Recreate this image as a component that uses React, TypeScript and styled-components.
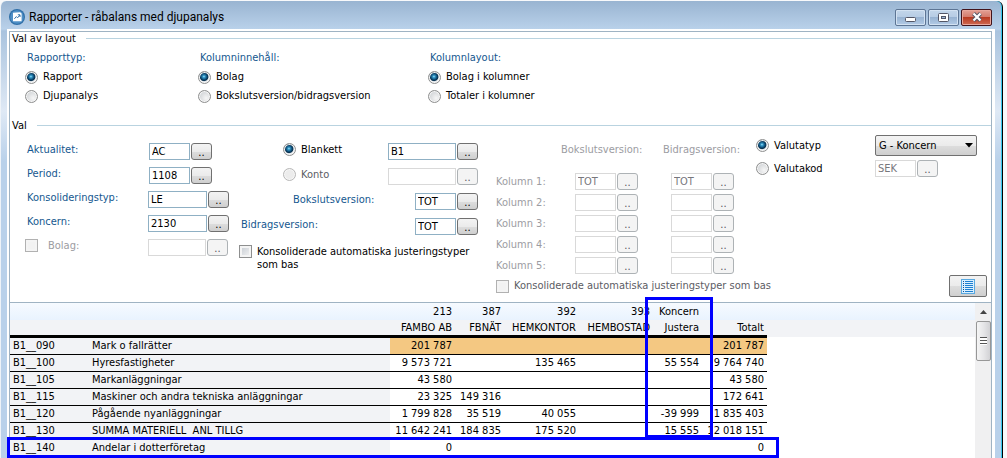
import React from "react";
import styled, { createGlobalStyle } from "styled-components";

const uiFont = `"DejaVu Sans Condensed", "Noto Sans", sans-serif`;

const GlobalStyle = createGlobalStyle`
  * { box-sizing: border-box; }
  body {
    margin: 0;
    background: #f8f9fb;
    color: #000;
    font: 11px/14px ${uiFont};
    overflow: hidden;
  }
  button, input, select { font: inherit; margin: 0; }
`;

const Desktop = styled.div`
  display: flex;
  flex-direction: column;
  min-height: 100vh;
  padding: 1px 4px 0 0;
`;

const Window = styled.main`
  position: relative;
  flex: 1;
  display: flex;
  flex-direction: column;
  border-left: 1px solid #eef3f8;
  border-right: 1px solid #000;
  box-shadow: inset -1px 0 #35c8ee;
  border-radius: 6px 6px 0 0;
  background: linear-gradient(#99b4d1 0, #b9d1ea 28px, #a9c3de 30px, #dfe9f5 110px, #b9d1ea 160px);
`;

const TitleBar = styled.header`
  display: flex;
  align-items: center;
  height: 28px;
  padding: 4px 10px 0 8px;
  gap: 4px;
`;

const Title = styled.h1`
  flex: 1;
  margin: 0;
  font: 12px/18px Roboto, sans-serif;
`;

const WindowButtons = styled.div`
  display: flex;
  gap: 2px;
`;

const WindowButton = styled.button<{ $close?: boolean }>`
  display: grid;
  place-items: center;
  width: 31px;
  height: 17px;
  padding: 0;
  border: 1px solid ${(p) => (p.$close ? "#42131a" : "#5d7594")};
  border-radius: 2px;
  box-shadow: inset 0 0 0 1px ${(p) => (p.$close ? "#e8a79c" : "#d3e2f2")};
  background: ${(p) =>
    p.$close
      ? "linear-gradient(#e3a196 0, #d3796a 48%, #b93b22 50%, #cf6a52 100%)"
      : "linear-gradient(#c3d6ea 0, #b6cce4 48%, #98b3d2 50%, #b3cbe6 100%)"};
`;

const Client = styled.div`
  flex: 1;
  display: flex;
  flex-direction: column;
  margin: 0 7px 0 6px;
  padding: 2px 3px 0 2px;
  background: #fff;
`;

const Panel = styled.div`
  position: relative;
  flex: 1;
  display: flex;
  flex-direction: column;
  border: 1px solid #9fb3c3;
  border-bottom: 0;
`;

const Section = styled.section`
  display: flex;
  flex-direction: column;
`;

const SectionHead = styled.h2`
  display: flex;
  align-items: center;
  gap: 10px;
  height: 14px;
  margin: 0;
  padding-left: 2px;
  font-size: 11px;
  font-weight: normal;
  &::after {
    content: "";
    flex: 1;
    height: 1px;
    margin-bottom: 2px;
    background: #b9d3e0;
  }
`;

const LayoutChoices = styled.div`
  display: grid;
  grid-template-columns: 173px 230px 1fr;
  padding: 5px 0 16px 15px;
`;

const ChoiceGroup = styled.fieldset`
  display: flex;
  flex-direction: column;
  gap: 5px;
  min-width: 0;
  margin: 0;
  padding: 0;
  border: 0;
`;

const Legend = styled.legend`
  padding: 0 0 5px 2px;
  color: #15578f;
`;

const Choice = styled.label<{ $muted?: boolean; $top?: boolean }>`
  display: flex;
  align-items: ${(p) => (p.$top ? "flex-start" : "center")};
  gap: 5px;
  line-height: ${(p) => (p.$top ? "13px" : "14px")};
  white-space: nowrap;
  color: ${(p) => (p.$muted ? "#5c5c64" : "#000")};
`;

const RadioInput = styled.input`
  appearance: none;
  flex: none;
  width: 13px;
  height: 13px;
  border: 1px solid #8e8f8f;
  border-radius: 50%;
  box-shadow: inset 0 0 0 1px #f6f6f6;
  background: radial-gradient(circle at 65% 65%, #f6f6f6, #c4c8cc);
  &:checked {
    background: radial-gradient(circle at 45% 42%, #b5ecff 0, #3aa0cf 1px, #0c4a74 3px, #0a3250 4px, #e9edf0 5px);
  }
  &:disabled {
    border-color: #b8b8b8;
    background: #ececec;
  }
`;

const CheckInput = styled.input`
  appearance: none;
  flex: none;
  width: 13px;
  height: 13px;
  border: 1px solid #8e8f8f;
  box-shadow: inset 0 0 0 2px #f4f4f4;
  background: linear-gradient(135deg, #c3c9d0, #f6f6f6);
  &:disabled {
    border-color: #b1b1b1;
    background: #f2f2f2;
  }
`;

const Selections = styled.div`
  display: grid;
  grid-template-columns: 214px 257px 260px 1fr;
  padding: 2px 4px 5px 15px;
`;

const FieldColumn = styled.div<{ $gap: number }>`
  display: flex;
  flex-direction: column;
  gap: ${(p) => p.$gap}px;
  padding-top: 8px;
`;

const FieldRow = styled.div<{ $indent?: number }>`
  display: flex;
  align-items: center;
  height: 17px;
  padding-left: ${(p) => p.$indent ?? 0}px;
`;

const FieldName = styled.div<{ $width: number }>`
  flex: none;
  width: ${(p) => p.$width}px;
`;

const FieldLabel = styled.label`
  display: block;
  line-height: 13px;
  margin-bottom: 4px;
  white-space: nowrap;
  color: #15578f;
`;

const FieldChoice = styled.div`
  margin-bottom: 4px;
`;

const BolagChoice = styled(Choice)`
  gap: 10px;
  margin-bottom: 4px;
  color: #9c9ca2;
`;

const Picker = styled.span`
  display: flex;
  gap: 1px;
`;

const TextBox = styled.input<{ $width: number }>`
  width: ${(p) => p.$width}px;
  height: 17px;
  padding: 0 2px;
  border: 1px solid #8fb0c4;
  border-radius: 0;
  background: #fff;
  color: #000;
  &:disabled {
    border-color: #d9d9d9;
    color: #77777c;
  }
`;

const PickButton = styled.button`
  width: 21px;
  height: 17px;
  padding: 2px 0 0;
  border: 1px solid #707070;
  border-radius: 3px;
  background: linear-gradient(#f3f3f3 0, #ebebeb 50%, #dddddd 52%, #cfcfcf 100%);
  color: #000;
  line-height: 13px;
  &:disabled {
    border-color: #adb2b5;
    background: #f4f4f4;
    color: #55555c;
  }
`;

const BasisChoice = styled(Choice)`
  padding-top: 2px;
`;

const KolumnHead = styled.div`
  display: grid;
  grid-template-columns: 102px 1fr;
  padding: 0 0 16px 65px;
  color: #9c9ca2;
`;

const KolumnRow = styled.div`
  display: grid;
  grid-template-columns: 79px 96px 1fr;
  align-items: center;
  height: 17px;
  margin-bottom: 4px;
  color: #9c9ca2;
`;

const ColumnBasis = styled.div`
  padding: 1px 0 4px;
`;

const CurrencyColumn = styled.div`
  display: flex;
  flex-direction: column;
  gap: 4px;
`;

const CurrencyRow = styled.div`
  display: grid;
  grid-template-columns: 119px 1fr;
  align-items: center;
`;

const SelectWrap = styled.span`
  position: relative;
  width: 102px;
  height: 21px;
  svg {
    position: absolute;
    right: 4px;
    top: 8px;
    pointer-events: none;
  }
`;

const SelectBox = styled.select`
  appearance: none;
  width: 100%;
  height: 21px;
  padding: 0 16px 0 3px;
  border: 1px solid #707070;
  border-radius: 2px;
  background: linear-gradient(#f3f3f3 0, #ebebeb 50%, #dddddd 52%, #cfcfcf 100%);
  color: #000;
`;

const ListButton = styled.button`
  display: grid;
  place-items: center;
  align-self: flex-end;
  width: 38px;
  height: 22px;
  margin-top: auto;
  padding: 0;
  border: 1px solid #707070;
  border-radius: 2px;
  background: linear-gradient(#f3f3f3 0, #ebebeb 50%, #dddddd 52%, #cfcfcf 100%);
`;

const Report = styled.section`
  position: relative;
  flex: 1;
  display: flex;
  border-top: 1px solid #9fb3c3;
  background: linear-gradient(#f6faff 0, #e9f3fe 17px, #f2f3f6 17px, #f2f3f6 34px, #fff 34px);
`;

const TableArea = styled.div`
  flex: 1;
  min-width: 0;
`;

const ReportTable = styled.table`
  width: 757px;
  table-layout: fixed;
  border-collapse: collapse;
  white-space: nowrap;
  th, td {
    height: 17px;
    padding: 0 3px;
    line-height: 16px;
    font-weight: normal;
    text-align: right;
  }
  thead th {
    height: 16px;
    padding-top: 2px;
    line-height: 14px;
  }
  tbody { border-top: 3px solid #000; }
  tbody tr { border-bottom: 1px solid #000; }
  tbody th {
    background: #f2f3f6;
    text-align: left;
  }
`;

const Amount = styled.td<{ $marked: boolean }>`
  background: ${(p) => (p.$marked ? "#f4c882" : "#fff")};
`;

const ScrollBar = styled.div`
  display: flex;
  flex-direction: column;
  align-items: center;
  width: 16px;
  background: #f0f0f1;
  svg { margin: 7px 0 7px; }
`;

const ScrollThumb = styled.div`
  display: grid;
  place-items: center;
  width: 15px;
  height: 40px;
  border: 1px solid #979797;
  border-radius: 2px;
  background: linear-gradient(90deg, #f5f5f5, #e6e6e8 50%, #d2d2d5);
  &::after {
    content: "";
    width: 7px;
    height: 8px;
    background: repeating-linear-gradient(#555 0 1px, #fff 1px 3px);
  }
`;

const Marking = styled.div`
  position: absolute;
  border: 3px solid #0000ff;
  pointer-events: none;
`;

const ColumnMarking = styled(Marking)`
  left: 635px;
  top: -6px;
  width: 68px;
  height: 141px;
`;

const RowMarking = styled(Marking)`
  left: -3px;
  top: 134px;
  width: 772px;
  height: 21px;
`;

function AppIcon() {
  return (
    <svg width="16" height="16" viewBox="0 0 16 16" aria-hidden="true">
      <circle cx="8" cy="8" r="8" fill="#2f6fa8" />
      <circle cx="8" cy="8" r="6.8" fill="#4f8fc6" />
      <path d="M4 3.8l7.2-.6L12.6 4.6v7.6H4z" fill="#fff" />
      <path d="M5.4 9.8l2-2.2 1.2 1.2 2.2-2.6M8.8 5.8h2.2v2.2" fill="none" stroke="#2f6fa8" />
    </svg>
  );
}

interface PickerFieldProps {
  id: string;
  name: string;
  width: number;
  value?: string;
  disabled?: boolean;
}

function PickerField({ id, name, width, value = "", disabled }: PickerFieldProps) {
  return (
    <Picker>
      <TextBox id={id} aria-label={name} $width={width} defaultValue={value} disabled={disabled} />
      <PickButton type="button" aria-label={`Välj ${name}`} disabled={disabled}>
        ..
      </PickButton>
    </Picker>
  );
}

interface RadioProps {
  group: string;
  text: string;
  checked?: boolean;
  disabled?: boolean;
}

function Radio({ group, text, checked, disabled }: RadioProps) {
  return (
    <Choice $muted={disabled}>
      <RadioInput type="radio" name={group} defaultChecked={checked} disabled={disabled} />
      {text}
    </Choice>
  );
}

const layoutGroups = [
  { title: "Rapporttyp:", options: ["Rapport", "Djupanalys"] },
  { title: "Kolumninnehåll:", options: ["Bolag", "Bokslutsversion/bidragsversion"] },
  { title: "Kolumnlayout:", options: ["Bolag i kolumner", "Totaler i kolumner"] },
];

const leftFields = [
  { id: "aktualitet", label: "Aktualitet", value: "AC", width: 41, offset: 122 },
  { id: "period", label: "Period", value: "1108", width: 41, offset: 122 },
  { id: "konstyp", label: "Konsolideringstyp", value: "LE", width: 59, offset: 121 },
  { id: "koncern", label: "Koncern", value: "2130", width: 59, offset: 121 },
];

const columnWidths = [79, 301, 65, 49, 75, 74, 49, 65];
const codes = ["", "", "213", "387", "392", "393", "Koncern", ""];
const names = ["", "", "FAMBO AB", "FBNÄT", "HEMKONTOR", "HEMBOSTAD", "Justera", "Totalt"];

const rows: [string, string, string[]][] = [
  ["B1__090", "Mark o fallrätter", ["201 787", "", "", "", "", "201 787"]],
  ["B1__100", "Hyresfastigheter", ["9 573 721", "", "135 465", "", "55 554", "9 764 740"]],
  ["B1__105", "Markanläggningar", ["43 580", "", "", "", "", "43 580"]],
  ["B1__115", "Maskiner och andra tekniska anläggningar", ["23 325", "149 316", "", "", "", "172 641"]],
  ["B1__120", "Pågående nyanläggningar", ["1 799 828", "35 519", "40 055", "", "-39 999", "1 835 403"]],
  ["B1__130", "SUMMA MATERIELL \u00a0ANL TILLG", ["11 642 241", "184 835", "175 520", "", "15 555", "12 018 151"]],
  ["B1__140", "Andelar i dotterföretag", ["0", "", "", "", "", "0"]],
];

export default function App() {
  return (
    <Desktop>
      <GlobalStyle />
      <Window>
        <TitleBar>
          <AppIcon />
          <Title>Rapporter - råbalans med djupanalys</Title>
          <WindowButtons>
            <WindowButton type="button" aria-label="Minimera">
              <svg width="11" height="9" viewBox="0 0 11 9">
                <rect x=".5" y="4.5" width="10" height="4" rx="1" fill="#fff" stroke="#535666" />
              </svg>
            </WindowButton>
            <WindowButton type="button" aria-label="Maximera">
              <svg width="11" height="9" viewBox="0 0 11 9">
                <rect x=".5" y=".5" width="10" height="8" rx="1" fill="#fff" stroke="#535666" />
                <rect x="3.5" y="3.5" width="4" height="2" fill="#9db7d5" stroke="#535666" />
              </svg>
            </WindowButton>
            <WindowButton type="button" aria-label="Stäng" $close>
              <svg width="12" height="10" viewBox="0 0 12 10">
                <path d="M2.5 1.5L9.5 8.5M9.5 1.5L2.5 8.5" stroke="#535666" strokeWidth="4" />
                <path d="M2.5 1.5L9.5 8.5M9.5 1.5L2.5 8.5" stroke="#fff" strokeWidth="2.2" />
              </svg>
            </WindowButton>
          </WindowButtons>
        </TitleBar>
        <Client>
          <Panel>
            <Section>
              <SectionHead>Val av layout</SectionHead>
              <LayoutChoices>
                {layoutGroups.map((g) => (
                  <ChoiceGroup key={g.title}>
                    <Legend>{g.title}</Legend>
                    {g.options.map((o, i) => (
                      <Radio key={o} group={g.title} text={o} checked={i === 0} />
                    ))}
                  </ChoiceGroup>
                ))}
              </LayoutChoices>
            </Section>
            <Section>
              <SectionHead>Val</SectionHead>
              <Selections>
                <FieldColumn $gap={7}>
                  {leftFields.map((f) => (
                    <FieldRow key={f.id} $indent={2}>
                      <FieldName $width={f.offset}>
                        <FieldLabel htmlFor={f.id}>{f.label}:</FieldLabel>
                      </FieldName>
                      <PickerField id={f.id} name={f.label} width={f.width} value={f.value} />
                    </FieldRow>
                  ))}
                  <FieldRow>
                    <FieldName $width={123}>
                      <BolagChoice>
                        <CheckInput type="checkbox" disabled />
                        Bolag:
                      </BolagChoice>
                    </FieldName>
                    <PickerField id="bolag" name="Bolag" width={58} disabled />
                  </FieldRow>
                </FieldColumn>
                <FieldColumn $gap={8}>
                  <FieldRow $indent={44}>
                    <FieldName $width={105}>
                      <FieldChoice>
                        <Radio group="urval" text="Blankett" checked />
                      </FieldChoice>
                    </FieldName>
                    <PickerField id="blankett" name="Blankett" width={68} value="B1" />
                  </FieldRow>
                  <FieldRow $indent={44}>
                    <FieldName $width={105}>
                      <FieldChoice>
                        <Radio group="urval" text="Konto" disabled />
                      </FieldChoice>
                    </FieldName>
                    <PickerField id="konto" name="Konto" width={68} disabled />
                  </FieldRow>
                  <FieldRow $indent={54}>
                    <FieldName $width={122}>
                      <FieldLabel htmlFor="bokslut">Bokslutsversion:</FieldLabel>
                    </FieldName>
                    <PickerField id="bokslut" name="Bokslutsversion" width={41} value="TOT" />
                  </FieldRow>
                  <FieldRow $indent={2}>
                    <FieldName $width={174}>
                      <FieldLabel htmlFor="bidrag">Bidragsversion:</FieldLabel>
                    </FieldName>
                    <PickerField id="bidrag" name="Bidragsversion" width={41} value="TOT" />
                  </FieldRow>
                  <BasisChoice $top>
                    <CheckInput type="checkbox" />
                    <span>
                      Konsoliderade automatiska justeringstyper
                      <br />
                      som bas
                    </span>
                  </BasisChoice>
                </FieldColumn>
                <FieldColumn $gap={0}>
                  <KolumnHead>
                    <span>Bokslutsversion:</span>
                    <span>Bidragsversion:</span>
                  </KolumnHead>
                  {[1, 2, 3, 4, 5].map((n) => (
                    <KolumnRow key={n}>
                      <span>Kolumn {n}:</span>
                      <PickerField id={`bok${n}`} name={`Bokslutsversion ${n}`} width={41} value={n === 1 ? "TOT" : ""} disabled />
                      <PickerField id={`bid${n}`} name={`Bidragsversion ${n}`} width={41} value={n === 1 ? "TOT" : ""} disabled />
                    </KolumnRow>
                  ))}
                  <ColumnBasis>
                    <Choice $muted>
                      <CheckInput type="checkbox" disabled />
                      Konsoliderade automatiska justeringstyper som bas
                    </Choice>
                  </ColumnBasis>
                </FieldColumn>
                <CurrencyColumn>
                  <CurrencyRow>
                    <Radio group="valuta" text="Valutatyp" checked />
                    <SelectWrap>
                      <SelectBox aria-label="Valutatyp" defaultValue="G">
                        <option value="G">G - Koncern</option>
                      </SelectBox>
                      <svg width="8" height="5" viewBox="0 0 8 5" aria-hidden="true">
                        <path d="M0 0h8L4 4.5z" />
                      </svg>
                    </SelectWrap>
                  </CurrencyRow>
                  <CurrencyRow>
                    <Radio group="valuta" text="Valutakod" />
                    <PickerField id="valutakod" name="Valutakod" width={41} value="SEK" disabled />
                  </CurrencyRow>
                  <ListButton type="button" aria-label="Visa rapport">
                    <svg width="14" height="15" viewBox="0 0 14 15">
                      <rect x=".5" y=".5" width="13" height="14" fill="#d9efff" stroke="#5aa9e0" />
                      <path d="M4 2.5h8M4 4.5h8M4 6.5h8M4 8.5h8M4 10.5h8M4 12.5h8" stroke="#1d7fd0" />
                      <path d="M2 2.5h1M2 4.5h1M2 6.5h1M2 8.5h1M2 10.5h1M2 12.5h1" stroke="#0d4f96" />
                    </svg>
                  </ListButton>
                </CurrencyColumn>
              </Selections>
            </Section>
            <Report>
              <TableArea>
                <ReportTable>
                  <colgroup>
                    {columnWidths.map((w, i) => (
                      <col key={i} width={w} />
                    ))}
                  </colgroup>
                  <thead>
                    <tr>
                      {codes.map((c, i) => (
                        <th key={i}>{c}</th>
                      ))}
                    </tr>
                    <tr>
                      {names.map((c, i) => (
                        <th key={i}>{c}</th>
                      ))}
                    </tr>
                  </thead>
                  <tbody>
                    {rows.map(([code, name, amounts], r) => (
                      <tr key={code}>
                        <th scope="row">{code}</th>
                        <th>{name}</th>
                        {amounts.map((a, i) => (
                          <Amount key={i} $marked={r === 0}>
                            {a}
                          </Amount>
                        ))}
                      </tr>
                    ))}
                  </tbody>
                </ReportTable>
              </TableArea>
              <ScrollBar>
                <svg width="7" height="4" viewBox="0 0 7 4" aria-hidden="true">
                  <path d="M0 4L3.5 0 7 4z" fill="#444" />
                </svg>
                <ScrollThumb />
              </ScrollBar>
              <ColumnMarking />
              <RowMarking />
            </Report>
          </Panel>
        </Client>
      </Window>
    </Desktop>
  );
}
